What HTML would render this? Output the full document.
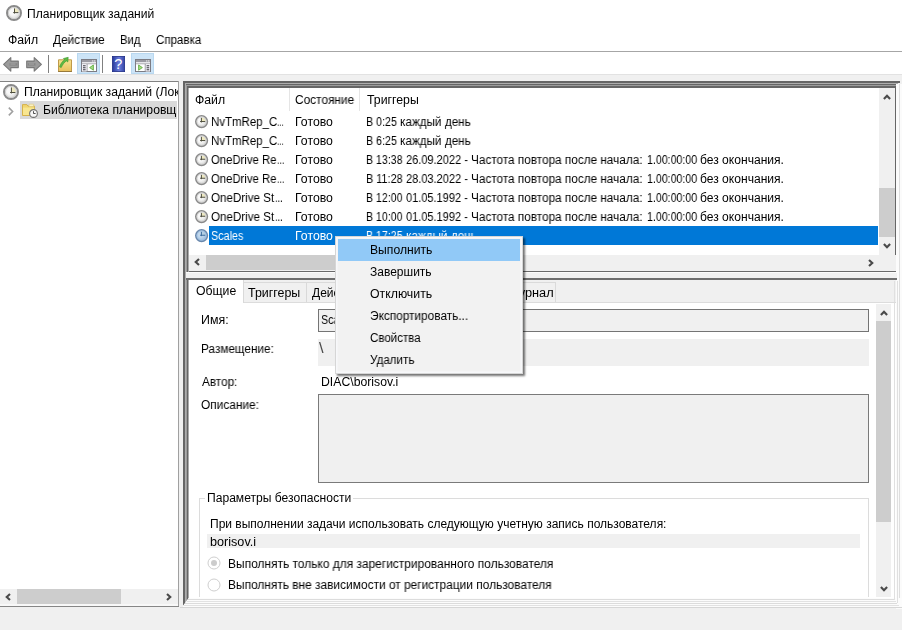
<!DOCTYPE html>
<html lang="ru"><head><meta charset="utf-8"><title>Планировщик заданий</title>
<style>
html,body{margin:0;padding:0;}
body{width:902px;height:630px;overflow:hidden;background:#f0f0f0;position:relative;font-family:"Liberation Sans",sans-serif;}
.t{position:absolute;white-space:nowrap;line-height:normal;display:block;will-change:transform;transform-origin:0 0;}
.r{position:absolute;display:block;}
svg{position:absolute;overflow:visible;}

</style></head>
<body>
<!-- title + menu -->
<div class="r" style="left:0;top:0;width:902px;height:51px;background:#fff"></div>
<div class="r" style="left:0;top:51px;width:902px;height:1px;background:#a6a6a6"></div>
<!-- toolbar -->
<div class="r" style="left:0;top:52px;width:902px;height:22px;background:#fff"></div>
<div class="r" style="left:0;top:74px;width:902px;height:0.9px;background:#e2e2e2"></div>
<!-- toolbar buttons -->
<div class="r" style="left:77.3px;top:52.6px;width:22.4px;height:21.5px;background:#cce4f7;border:1px solid #b9d8f0;box-sizing:border-box"></div>
<div class="r" style="left:131.3px;top:52.6px;width:22.4px;height:21.5px;background:#cce4f7;border:1px solid #b9d8f0;box-sizing:border-box"></div>
<div class="r" style="left:48px;top:55px;width:1px;height:17.7px;background:#808080"></div>
<div class="r" style="left:102.2px;top:55px;width:1px;height:17.7px;background:#808080"></div>
<!-- back / forward arrows -->
<svg style="left:3px;top:57px" width="16" height="15" viewBox="0 0 16 15"><path d="M7.8 0.6 L0.6 7.3 L7.8 14.2 L7.8 10.6 L15.3 10.6 L15.3 4.1 L7.8 4.1 Z" fill="#9b9b9b" stroke="#787878" stroke-width="1.1" stroke-linejoin="round"/><path d="M6.5 6.2h7.6v2.4H6.5z" fill="#868686"/><path d="M7.5 6.6h5v0.9h-5z" fill="#a8a8a8"/></svg>
<svg style="left:26px;top:57px" width="16" height="15" viewBox="0 0 16 15"><path d="M8.2 0.6 L15.4 7.3 L8.2 14.2 L8.2 10.6 L0.7 10.6 L0.7 4.1 L8.2 4.1 Z" fill="#9b9b9b" stroke="#787878" stroke-width="1.1" stroke-linejoin="round"/><path d="M1.9 6.2h7.6v2.4H1.9z" fill="#868686"/><path d="M3 6.6h5v0.9H3z" fill="#a8a8a8"/></svg>
<!-- folder up -->
<svg style="left:58px;top:57px" width="14" height="15" viewBox="0 0 14 15"><defs><linearGradient id="fg" x1="0" y1="0" x2="0" y2="1"><stop offset="0" stop-color="#f6e391"/><stop offset="1" stop-color="#e9c05c"/></linearGradient></defs><path d="M0.5 2.8h13v11.7H0.5z" fill="url(#fg)" stroke="#bf9a4a" stroke-width="1"/><path d="M0 14.2h14v0.8H0z" fill="#8f7136"/><path d="M1.6 9.8 C2.6 6.6 4.6 4 6.6 2.8 L5.4 1.5 L10.2 0.3 L9.8 5 L8.4 3.9 C6.6 5 4.6 7.4 3.2 10.6 Z" fill="#5dbb45" stroke="#3a962c" stroke-width="0.6"/></svg>
<!-- show/hide tree icon -->
<svg style="left:81px;top:59px" width="16" height="13" viewBox="0 0 16 13"><rect x="0.5" y="0.5" width="15" height="12" fill="#fff" stroke="#7c7c84"/><rect x="1" y="1" width="14" height="2" fill="#9a9aa2"/><rect x="11.2" y="1.4" width="1.1" height="1.1" fill="#fff"/><rect x="13.2" y="1.4" width="1.1" height="1.1" fill="#fff"/><rect x="1" y="3" width="14" height="1.5" fill="#e6e6ea"/><rect x="1" y="4.5" width="14" height="0.7" fill="#8c8c94"/><rect x="5.5" y="5" width="0.9" height="7.5" fill="#7c7c84"/><rect x="1" y="5.2" width="4.5" height="7.3" fill="#efeff6"/><rect x="2" y="6.2" width="2.6" height="1.1" fill="#4a4a52"/><rect x="2" y="8.2" width="2.6" height="1.1" fill="#4a4a52"/><rect x="2" y="10.2" width="2.6" height="1.1" fill="#4a4a52"/><path d="M12.4 6v5.2L8.6 8.6z" fill="#a6dc86" stroke="#58a835" stroke-width="0.8"/></svg>
<svg style="left:135px;top:59.2px" width="16" height="13" viewBox="0 0 16 13"><rect x="0.5" y="0.5" width="15" height="12" fill="#fff" stroke="#7c7c84"/><rect x="1" y="1" width="14" height="2" fill="#9a9aa2"/><rect x="11.2" y="1.4" width="1.1" height="1.1" fill="#fff"/><rect x="13.2" y="1.4" width="1.1" height="1.1" fill="#fff"/><rect x="1" y="3" width="14" height="1.5" fill="#e6e6ea"/><rect x="1" y="4.5" width="14" height="0.7" fill="#8c8c94"/><rect x="9.8" y="5" width="0.9" height="7.5" fill="#7c7c84"/><rect x="10.7" y="5.2" width="4.3" height="7.3" fill="#efeff6"/><rect x="11.6" y="6.2" width="2.6" height="1.1" fill="#4a4a52"/><rect x="11.6" y="8.2" width="2.6" height="1.1" fill="#4a4a52"/><rect x="11.6" y="10.2" width="2.6" height="1.1" fill="#4a4a52"/><path d="M3.6 6v5.2L7.4 8.6z" fill="#a6dc86" stroke="#58a835" stroke-width="0.8"/></svg>
<!-- help icon -->
<svg style="left:112px;top:56px" width="13" height="16" viewBox="0 0 13 16"><defs><linearGradient id="hg" x1="0" y1="0" x2="1" y2="0"><stop offset="0" stop-color="#27389a"/><stop offset="0.55" stop-color="#6b7ddb"/><stop offset="1" stop-color="#3344a6"/></linearGradient></defs><rect x="0.4" y="0.4" width="12.2" height="15.2" fill="url(#hg)" stroke="#1f2d86" stroke-width="0.8"/><text x="6.3" y="13" text-anchor="middle" font-family="Liberation Sans, sans-serif" font-size="14.5" fill="#fff">?</text></svg>

<!-- left panel -->
<div class="r" style="left:0;top:81.3px;width:179px;height:1px;background:#828282"></div>
<div class="r" style="left:0;top:82px;width:178px;height:524px;background:#fff"></div>
<div class="r" style="left:178px;top:81px;width:1px;height:526px;background:#a0a0a0"></div>
<div class="r" style="left:0;top:606px;width:179px;height:1px;background:#868686"></div>
<div class="r" style="left:20.2px;top:101.3px;width:156.8px;height:17.5px;background:#d9d9d9"></div>
<!-- tree chevron -->
<svg style="left:8px;top:107px" width="6" height="9" viewBox="0 0 6 9"><path d="M0.8 0.6 L4.6 4.5 L0.8 8.4" fill="none" stroke="#a0a0a0" stroke-width="1.6"/></svg>
<!-- left hscroll -->
<div class="r" style="left:0;top:588.8px;width:178px;height:16.4px;background:#f0f0f0"></div><div class="r" style="left:0;top:604.2px;width:178px;height:1.8px;background:#f8f8f8"></div>
<div class="r" style="left:17px;top:588.8px;width:103.5px;height:15.4px;background:#cdcdcd"></div>
<svg style="left:4.6px;top:592.6px" width="6" height="8" viewBox="0 0 6 8"><path d="M5 0.9 L1.7 4 L5 7.1" fill="none" stroke="#4a4a4a" stroke-width="2.1"/></svg>
<svg style="left:166.4px;top:592.7px" width="6" height="8" viewBox="0 0 6 8"><path d="M1 0.9 L4.3 4 L1 7.1" fill="none" stroke="#4a4a4a" stroke-width="2.1"/></svg>

<!-- right frame: thick top/left border -->
<div class="r" style="left:182.5px;top:81.2px;width:717.5px;height:2.3px;background:#666666"></div>
<div class="r" style="left:182.5px;top:83px;width:714.5px;height:4.9px;background:#666666"></div>
<div class="r" style="left:182.5px;top:81.2px;width:6px;height:525.6px;background:#666666;clip-path:polygon(0 0,100% 0,100% 518.3px,0 525.6px)"></div>
<div class="r" style="left:184.6px;top:83.2px;width:713px;height:0.8px;background:#adadad"></div>
<div class="r" style="left:186.3px;top:85px;width:710px;height:0.7px;background:#9c9c9c"></div>
<div class="r" style="left:184.6px;top:83.2px;width:0.8px;height:521px;background:#adadad"></div>
<div class="r" style="left:186.3px;top:85px;width:0.7px;height:517px;background:#9c9c9c"></div>
<!-- top pane -->
<div class="r" style="left:188.5px;top:87.9px;width:707.5px;height:183.1px;background:#fff"></div>
<div class="r" style="left:895.1px;top:86px;width:1.2px;height:186.2px;background:#666"></div>
<div class="r" style="left:188.5px;top:270.9px;width:707.8px;height:1.3px;background:#6a6a6a"></div>
<div class="r" style="left:896.3px;top:83.5px;width:5.7px;height:525px;background:#fbfbfb"></div>
<div class="r" style="left:899.3px;top:84px;width:1px;height:521px;background:#dedede"></div>
<!-- header separators -->
<div class="r" style="left:289px;top:88px;width:1px;height:23px;background:#e5e5e5"></div>
<div class="r" style="left:359px;top:88px;width:1px;height:23px;background:#e5e5e5"></div>
<!-- selected row -->
<div class="r" style="left:209px;top:226px;width:669px;height:18.7px;background:#0078d7"></div>
<!-- vscroll top pane -->
<div class="r" style="left:879.2px;top:87.9px;width:16px;height:167.1px;background:#f0f0f0"></div>
<div class="r" style="left:879.2px;top:188px;width:16px;height:48.6px;background:#cdcdcd"></div>
<svg style="left:883.2px;top:93.9px" width="8" height="6" viewBox="0 0 8 6"><path d="M0.9 5 L4 1.7 L7.1 5" fill="none" stroke="#4a4a4a" stroke-width="2.1"/></svg>
<svg style="left:883px;top:242.9px" width="8" height="6" viewBox="0 0 8 6"><path d="M0.9 1 L4 4.3 L7.1 1" fill="none" stroke="#4a4a4a" stroke-width="2.1"/></svg>
<!-- hscroll top pane -->
<div class="r" style="left:188.5px;top:255px;width:707.1px;height:15.9px;background:#f0f0f0"></div>
<div class="r" style="left:206.1px;top:255px;width:230px;height:15px;background:#cdcdcd"></div>
<svg style="left:193.7px;top:258.4px" width="6" height="8" viewBox="0 0 6 8"><path d="M5 0.9 L1.7 4 L5 7.1" fill="none" stroke="#4a4a4a" stroke-width="2.1"/></svg>
<svg style="left:868px;top:258.7px" width="6" height="8" viewBox="0 0 6 8"><path d="M1 0.9 L4.3 4 L1 7.1" fill="none" stroke="#4a4a4a" stroke-width="2.1"/></svg>
<!-- splitter gap -->
<div class="r" style="left:185.8px;top:272.2px;width:711.2px;height:6.2px;background:#f1f1f1"></div>
<div class="r" style="left:185.8px;top:272.2px;width:711.2px;height:1.3px;background:#fcfcfc"></div>
<!-- bottom pane -->
<div class="r" style="left:185.8px;top:278.3px;width:711.2px;height:1.9px;background:#6e6e6e"></div>
<div class="r" style="left:188.5px;top:280.2px;width:707.5px;height:317.8px;background:#fff"></div>
<div class="r" style="left:188.5px;top:280.2px;width:707.5px;height:22px;background:#f0f0f0"></div>
<!-- bottom/right light bevel -->
<div class="r" style="left:182.5px;top:598px;width:719.5px;height:10px;background:#fcfcfc;clip-path:polygon(6px 0,100% 0,100% 100%,0 100%,0 8.6px)"></div>
<div class="r" style="left:188.3px;top:599.3px;width:706px;height:0.8px;background:#dcdcdc"></div>
<div class="r" style="left:186.8px;top:601.1px;width:709px;height:0.8px;background:#e2e2e2"></div>
<div class="r" style="left:185.2px;top:602.9px;width:712px;height:0.8px;background:#dcdcdc"></div>
<div class="r" style="left:183.6px;top:604.8px;width:715px;height:0.8px;background:#e2e2e2"></div>
<div class="r" style="left:180px;top:607px;width:722px;height:0.9px;background:#d6d6d6"></div>
<div class="r" style="left:893.7px;top:281px;width:0.9px;height:319px;background:#e0e0e0"></div>
<div class="r" style="left:896.9px;top:281px;width:0.9px;height:322px;background:#e0e0e0"></div>
<!-- tabs -->
<div class="r" style="left:243.3px;top:282px;width:312.7px;height:21px;background:#f0f0f0;border:1px solid #dadada;box-sizing:border-box"></div>
<div class="r" style="left:305.5px;top:283px;width:1px;height:19px;background:#d9d9d9"></div>
<div class="r" style="left:368px;top:283px;width:1px;height:19px;background:#d9d9d9"></div>
<div class="r" style="left:425.5px;top:283px;width:1px;height:19px;background:#d9d9d9"></div>
<div class="r" style="left:497px;top:283px;width:1px;height:19px;background:#d9d9d9"></div>
<div class="r" style="left:243px;top:302px;width:653px;height:1px;background:#dcdcdc"></div>
<div class="r" style="left:188.5px;top:280.2px;width:54px;height:23px;background:#fff;border-right:1px solid #d9d9d9"></div>
<!-- form fields -->
<div class="r" style="left:318px;top:309px;width:551px;height:22.8px;background:#f0f0f0;border:1px solid #747474;box-sizing:border-box"></div>
<div class="r" style="left:318px;top:339.1px;width:551px;height:26.5px;background:#f0f0f0"></div>
<div class="r" style="left:318px;top:394.3px;width:551px;height:88.5px;background:#f0f0f0;border:1px solid #7a7a7a;box-sizing:border-box"></div>
<!-- group box -->
<div class="r" style="left:198.5px;top:497.7px;width:670.5px;height:99.8px;border:1px solid #dcdcdc;border-bottom:none;box-sizing:border-box"></div>
<div class="r" style="left:205px;top:492px;width:148px;height:12px;background:#fff"></div>
<div class="r" style="left:206.6px;top:534px;width:653.4px;height:14px;background:#f0f0f0"></div>
<!-- radios -->
<svg style="left:206.6px;top:556.1px" width="14" height="14" viewBox="0 0 14 14"><circle cx="7" cy="7" r="6" fill="#fff" stroke="#cfcfcf" stroke-width="1"/><circle cx="7" cy="7" r="3" fill="#cccccc"/></svg>
<svg style="left:206.6px;top:578.1px" width="14" height="14" viewBox="0 0 14 14"><circle cx="7" cy="7" r="6" fill="#fff" stroke="#cfcfcf" stroke-width="1"/></svg>
<!-- vscroll bottom pane -->
<div class="r" style="left:876.2px;top:303.8px;width:14.7px;height:293.7px;background:#f0f0f0"></div>
<div class="r" style="left:876.2px;top:320.9px;width:14.7px;height:201.1px;background:#cdcdcd"></div>
<svg style="left:879.6px;top:309.9px" width="8" height="6" viewBox="0 0 8 6"><path d="M0.9 5 L4 1.7 L7.1 5" fill="none" stroke="#4a4a4a" stroke-width="2.1"/></svg>
<svg style="left:879.5px;top:585.8px" width="8" height="6" viewBox="0 0 8 6"><path d="M0.9 1 L4 4.3 L7.1 1" fill="none" stroke="#4a4a4a" stroke-width="2.1"/></svg>

<svg style="left:6px;top:4.9px" width="16" height="16" viewBox="0 0 16 16"><defs><radialGradient id="cga" cx="0.42" cy="0.42" r="0.65"><stop offset="0.3" stop-color="#f8f8f8"/><stop offset="1" stop-color="#d2d2d0"/></radialGradient></defs><circle cx="8.0" cy="8.0" r="7.05" fill="url(#cga)" stroke="#8a8a8a" stroke-width="1.90"/><circle cx="8.0" cy="8.0" r="5.60" fill="none" stroke="#cfcfcf" stroke-width="1.00"/><path d="M9.00 7.10 V3.20 A4.80 4.80 0 0 1 12.80 7.10 Z" fill="#ebe4ae" opacity="0.75"/><path d="M8.50 3.40 V8.50 M7.20 7.60 H12.40" fill="none" stroke="#4e4e3c" stroke-width="1"/></svg>
<svg style="left:3.1px;top:84px" width="16" height="16" viewBox="0 0 16 16"><defs><radialGradient id="cgb" cx="0.42" cy="0.42" r="0.65"><stop offset="0.3" stop-color="#f8f8f8"/><stop offset="1" stop-color="#d2d2d0"/></radialGradient></defs><circle cx="8.0" cy="8.0" r="7.05" fill="url(#cgb)" stroke="#8a8a8a" stroke-width="1.90"/><circle cx="8.0" cy="8.0" r="5.60" fill="none" stroke="#cfcfcf" stroke-width="1.00"/><path d="M8.90 8.00 V3.20 A4.80 4.80 0 0 1 12.80 8.00 Z" fill="#ebe4ae" opacity="0.75"/><path d="M8.40 3.40 V9.40 M7.10 8.50 H12.40" fill="none" stroke="#4e4e3c" stroke-width="1"/></svg>
<svg style="left:195.1px;top:114.95px" width="13.2" height="13.2" viewBox="0 0 13.2 13.2"><defs><radialGradient id="cgr0" cx="0.42" cy="0.42" r="0.65"><stop offset="0.3" stop-color="#f8f8f8"/><stop offset="1" stop-color="#d2d2d0"/></radialGradient></defs><circle cx="6.6" cy="6.6" r="5.82" fill="url(#cgr0)" stroke="#8a8a8a" stroke-width="1.57"/><circle cx="6.6" cy="6.6" r="4.62" fill="none" stroke="#cfcfcf" stroke-width="0.82"/><path d="M6.90 6.05 V2.64 A3.96 3.96 0 0 1 10.56 6.05 Z" fill="#ebe4ae" opacity="0.75"/><path d="M6.40 2.81 V7.45 M5.10 6.55 H10.23" fill="none" stroke="#4e4e3c" stroke-width="1"/></svg>
<svg style="left:195.1px;top:133.95px" width="13.2" height="13.2" viewBox="0 0 13.2 13.2"><defs><radialGradient id="cgr1" cx="0.42" cy="0.42" r="0.65"><stop offset="0.3" stop-color="#f8f8f8"/><stop offset="1" stop-color="#d2d2d0"/></radialGradient></defs><circle cx="6.6" cy="6.6" r="5.82" fill="url(#cgr1)" stroke="#8a8a8a" stroke-width="1.57"/><circle cx="6.6" cy="6.6" r="4.62" fill="none" stroke="#cfcfcf" stroke-width="0.82"/><path d="M6.90 6.05 V2.64 A3.96 3.96 0 0 1 10.56 6.05 Z" fill="#ebe4ae" opacity="0.75"/><path d="M6.40 2.81 V7.45 M5.10 6.55 H10.23" fill="none" stroke="#4e4e3c" stroke-width="1"/></svg>
<svg style="left:195.1px;top:153.25px" width="13.2" height="13.2" viewBox="0 0 13.2 13.2"><defs><radialGradient id="cgr2" cx="0.42" cy="0.42" r="0.65"><stop offset="0.3" stop-color="#f8f8f8"/><stop offset="1" stop-color="#d2d2d0"/></radialGradient></defs><circle cx="6.6" cy="6.6" r="5.82" fill="url(#cgr2)" stroke="#8a8a8a" stroke-width="1.57"/><circle cx="6.6" cy="6.6" r="4.62" fill="none" stroke="#cfcfcf" stroke-width="0.82"/><path d="M6.90 5.75 V2.64 A3.96 3.96 0 0 1 10.56 5.75 Z" fill="#ebe4ae" opacity="0.75"/><path d="M6.40 2.81 V7.15 M5.10 6.25 H10.23" fill="none" stroke="#4e4e3c" stroke-width="1"/></svg>
<svg style="left:195.1px;top:172.25px" width="13.2" height="13.2" viewBox="0 0 13.2 13.2"><defs><radialGradient id="cgr3" cx="0.42" cy="0.42" r="0.65"><stop offset="0.3" stop-color="#f8f8f8"/><stop offset="1" stop-color="#d2d2d0"/></radialGradient></defs><circle cx="6.6" cy="6.6" r="5.82" fill="url(#cgr3)" stroke="#8a8a8a" stroke-width="1.57"/><circle cx="6.6" cy="6.6" r="4.62" fill="none" stroke="#cfcfcf" stroke-width="0.82"/><path d="M6.90 5.75 V2.64 A3.96 3.96 0 0 1 10.56 5.75 Z" fill="#ebe4ae" opacity="0.75"/><path d="M6.40 2.81 V7.15 M5.10 6.25 H10.23" fill="none" stroke="#4e4e3c" stroke-width="1"/></svg>
<svg style="left:195.1px;top:191.25px" width="13.2" height="13.2" viewBox="0 0 13.2 13.2"><defs><radialGradient id="cgr4" cx="0.42" cy="0.42" r="0.65"><stop offset="0.3" stop-color="#f8f8f8"/><stop offset="1" stop-color="#d2d2d0"/></radialGradient></defs><circle cx="6.6" cy="6.6" r="5.82" fill="url(#cgr4)" stroke="#8a8a8a" stroke-width="1.57"/><circle cx="6.6" cy="6.6" r="4.62" fill="none" stroke="#cfcfcf" stroke-width="0.82"/><path d="M6.90 5.75 V2.64 A3.96 3.96 0 0 1 10.56 5.75 Z" fill="#ebe4ae" opacity="0.75"/><path d="M6.40 2.81 V7.15 M5.10 6.25 H10.23" fill="none" stroke="#4e4e3c" stroke-width="1"/></svg>
<svg style="left:195.1px;top:210.25px" width="13.2" height="13.2" viewBox="0 0 13.2 13.2"><defs><radialGradient id="cgr5" cx="0.42" cy="0.42" r="0.65"><stop offset="0.3" stop-color="#f8f8f8"/><stop offset="1" stop-color="#d2d2d0"/></radialGradient></defs><circle cx="6.6" cy="6.6" r="5.82" fill="url(#cgr5)" stroke="#8a8a8a" stroke-width="1.57"/><circle cx="6.6" cy="6.6" r="4.62" fill="none" stroke="#cfcfcf" stroke-width="0.82"/><path d="M6.90 5.75 V2.64 A3.96 3.96 0 0 1 10.56 5.75 Z" fill="#ebe4ae" opacity="0.75"/><path d="M6.40 2.81 V7.15 M5.10 6.25 H10.23" fill="none" stroke="#4e4e3c" stroke-width="1"/></svg>
<svg style="left:195.1px;top:229.25px" width="13.2" height="13.2" viewBox="0 0 13.2 13.2"><defs><radialGradient id="cgr6" cx="0.42" cy="0.42" r="0.65"><stop offset="0.3" stop-color="#c3d8ec"/><stop offset="1" stop-color="#8fb2d6"/></radialGradient></defs><circle cx="6.6" cy="6.6" r="5.82" fill="url(#cgr6)" stroke="#6a88ac" stroke-width="1.57"/><circle cx="6.6" cy="6.6" r="4.62" fill="none" stroke="#9ec0e4" stroke-width="0.82"/><path d="M6.90 5.75 V2.64 A3.96 3.96 0 0 1 10.56 5.75 Z" fill="#b4cfe0" opacity="0.75"/><path d="M6.40 2.81 V7.15 M5.10 6.25 H10.23" fill="none" stroke="#3a6a9e" stroke-width="1"/></svg>
<svg style="left:22px;top:103px" width="16" height="15" viewBox="0 0 16 15"><path d="M0.5 1.6h4.4l1.1 1.5h6.4v9.4H0.5z" fill="#f1d56e" stroke="#d6b24a" stroke-width="1"/><path d="M7 1.2h4.6v2.2H7z" fill="#fbf3c8" stroke="#e0c878" stroke-width="0.6"/><path d="M1 4.6h11v7.4H1z" fill="#f8e690"/><circle cx="11.5" cy="10.5" r="3.9" fill="#f7f7f7" stroke="#707070" stroke-width="1.1"/><path d="M11.5 8.2V10.5H13.6" fill="none" stroke="#3c3c3c" stroke-width="0.9"/></svg>

<span class="t" style="left:26.52px;top:7.14px;font-size:12px;color:#000;transform:scaleX(1.0069);">Планировщик заданий</span>
<span class="t" style="left:7.76px;top:33.14px;font-size:12px;color:#000;transform:scaleX(1.0204);">Файл</span>
<span class="t" style="left:52.89px;top:33.14px;font-size:12px;color:#000;transform:scaleX(0.9810);">Действие</span>
<span class="t" style="left:119.88px;top:33.14px;font-size:12px;color:#000;transform:scaleX(0.9342);">Вид</span>
<span class="t" style="left:156.18px;top:33.14px;font-size:12px;color:#000;transform:scaleX(0.9602);">Справка</span>
<div class="r" style="left:0;top:0;width:177.5px;height:630px;overflow:hidden"><span class="t" style="left:23.72px;top:85.14px;font-size:12px;color:#000;transform:scaleX(1.0133);">Планировщик заданий (Локальный)</span></div>
<div class="r" style="left:0;top:0;width:177px;height:630px;overflow:hidden"><span class="t" style="left:43.30px;top:103.14px;font-size:12px;color:#000;transform:scaleX(1.0126);">Библиотека планировщика заданий</span></div>
<span class="t" style="left:194.76px;top:93.44px;font-size:12px;color:#000;transform:scaleX(1.0204);">Файл</span>
<span class="t" style="left:295.36px;top:93.44px;font-size:12px;color:#000;transform:scaleX(0.9880);">Состояние</span>
<span class="t" style="left:366.71px;top:93.44px;font-size:12px;color:#000;transform:scaleX(1.0253);">Триггеры</span>
<span class="t" style="left:210.76px;top:115.14px;font-size:12px;color:#000;transform:scaleX(0.9543);">NvTmRep_C</span><span class="t" style="left:276.94px;top:115.14px;font-size:12px;color:#000;transform:scaleX(0.6868);">...</span>
<span class="t" style="left:294.99px;top:115.14px;font-size:12px;color:#000;transform:scaleX(1.0240);">Готово</span>
<span class="t" style="left:366.12px;top:115.14px;font-size:12px;color:#000;transform:scaleX(0.8910);">В 0:25 </span><span class="t" style="left:400.31px;top:115.14px;font-size:12px;color:#000;transform:scaleX(0.9760);">каждый день</span>
<span class="t" style="left:210.76px;top:134.14px;font-size:12px;color:#000;transform:scaleX(0.9543);">NvTmRep_C</span><span class="t" style="left:276.94px;top:134.14px;font-size:12px;color:#000;transform:scaleX(0.6868);">...</span>
<span class="t" style="left:294.99px;top:134.14px;font-size:12px;color:#000;transform:scaleX(1.0240);">Готово</span>
<span class="t" style="left:366.12px;top:134.14px;font-size:12px;color:#000;transform:scaleX(0.8910);">В 6:25 </span><span class="t" style="left:400.31px;top:134.14px;font-size:12px;color:#000;transform:scaleX(0.9760);">каждый день</span>
<span class="t" style="left:211.13px;top:153.34px;font-size:12px;color:#000;transform:scaleX(0.9439);">OneDrive Re</span><span class="t" style="left:277.39px;top:153.34px;font-size:12px;color:#000;transform:scaleX(0.7249);">...</span>
<span class="t" style="left:294.99px;top:153.34px;font-size:12px;color:#000;transform:scaleX(1.0240);">Готово</span>
<span class="t" style="left:366.13px;top:153.34px;font-size:12px;color:#000;transform:scaleX(0.8831);">В 13:38 </span><span class="t" style="left:406.02px;top:153.34px;font-size:12px;color:#000;transform:scaleX(0.9179);">26.09.2022 - </span><span class="t" style="left:471.48px;top:153.34px;font-size:12px;color:#000;transform:scaleX(0.9801);">Частота повтора после начала: </span><span class="t" style="left:646.58px;top:153.34px;font-size:12px;color:#000;transform:scaleX(0.8850);">1.00:00:00 </span><span class="t" style="left:700.27px;top:153.34px;font-size:12px;color:#000;transform:scaleX(1.0060);">без окончания.</span>
<span class="t" style="left:211.13px;top:172.34px;font-size:12px;color:#000;transform:scaleX(0.9439);">OneDrive Re</span><span class="t" style="left:277.39px;top:172.34px;font-size:12px;color:#000;transform:scaleX(0.7249);">...</span>
<span class="t" style="left:294.99px;top:172.34px;font-size:12px;color:#000;transform:scaleX(1.0240);">Готово</span>
<span class="t" style="left:366.11px;top:172.34px;font-size:12px;color:#000;transform:scaleX(0.9058);">В 11:28 </span><span class="t" style="left:406.02px;top:172.34px;font-size:12px;color:#000;transform:scaleX(0.9179);">28.03.2022 - </span><span class="t" style="left:471.48px;top:172.34px;font-size:12px;color:#000;transform:scaleX(0.9801);">Частота повтора после начала: </span><span class="t" style="left:646.58px;top:172.34px;font-size:12px;color:#000;transform:scaleX(0.8850);">1.00:00:00 </span><span class="t" style="left:700.27px;top:172.34px;font-size:12px;color:#000;transform:scaleX(1.0060);">без окончания.</span>
<span class="t" style="left:211.12px;top:191.34px;font-size:12px;color:#000;transform:scaleX(0.9661);">OneDrive St</span><span class="t" style="left:274.86px;top:191.34px;font-size:12px;color:#000;transform:scaleX(0.7504);">...</span>
<span class="t" style="left:294.99px;top:191.34px;font-size:12px;color:#000;transform:scaleX(1.0240);">Готово</span>
<span class="t" style="left:366.13px;top:191.34px;font-size:12px;color:#000;transform:scaleX(0.8816);">В 12:00 </span><span class="t" style="left:406.14px;top:191.34px;font-size:12px;color:#000;transform:scaleX(0.9162);">01.05.1992 - </span><span class="t" style="left:471.48px;top:191.34px;font-size:12px;color:#000;transform:scaleX(0.9801);">Частота повтора после начала: </span><span class="t" style="left:646.58px;top:191.34px;font-size:12px;color:#000;transform:scaleX(0.8850);">1.00:00:00 </span><span class="t" style="left:700.27px;top:191.34px;font-size:12px;color:#000;transform:scaleX(1.0060);">без окончания.</span>
<span class="t" style="left:211.12px;top:210.34px;font-size:12px;color:#000;transform:scaleX(0.9661);">OneDrive St</span><span class="t" style="left:274.86px;top:210.34px;font-size:12px;color:#000;transform:scaleX(0.7504);">...</span>
<span class="t" style="left:294.99px;top:210.34px;font-size:12px;color:#000;transform:scaleX(1.0240);">Готово</span>
<span class="t" style="left:366.13px;top:210.34px;font-size:12px;color:#000;transform:scaleX(0.8816);">В 10:00 </span><span class="t" style="left:406.14px;top:210.34px;font-size:12px;color:#000;transform:scaleX(0.9162);">01.05.1992 - </span><span class="t" style="left:471.48px;top:210.34px;font-size:12px;color:#000;transform:scaleX(0.9801);">Частота повтора после начала: </span><span class="t" style="left:646.58px;top:210.34px;font-size:12px;color:#000;transform:scaleX(0.8850);">1.00:00:00 </span><span class="t" style="left:700.27px;top:210.34px;font-size:12px;color:#000;transform:scaleX(1.0060);">без окончания.</span>
<span class="t" style="left:210.90px;top:229.34px;font-size:12px;color:#fff;transform:scaleX(0.8993);">Scales</span>
<span class="t" style="left:294.99px;top:229.34px;font-size:12px;color:#fff;transform:scaleX(1.0240);">Готово</span>
<span class="t" style="left:366.13px;top:229.34px;font-size:12px;color:#fff;transform:scaleX(0.8836);">В 17:25 </span><span class="t" style="left:406.21px;top:229.34px;font-size:12px;color:#fff;transform:scaleX(0.9760);">каждый день</span>
<span class="t" style="left:196.39px;top:284.14px;font-size:12px;color:#000;transform:scaleX(1.0202);">Общие</span>
<span class="t" style="left:248.31px;top:286.44px;font-size:12px;color:#000;transform:scaleX(1.0354);">Триггеры</span>
<span class="t" style="left:312.39px;top:286.44px;font-size:12px;color:#000;">Действия</span>
<span class="t" style="left:374.38px;top:286.44px;font-size:12px;color:#000;">Условия</span>
<span class="t" style="left:431.03px;top:286.44px;font-size:12px;color:#000;">Параметры</span>
<span class="t" style="left:506.83px;top:286.44px;font-size:12px;color:#000;transform:scaleX(1.0643);">Журнал</span>
<span class="t" style="left:200.98px;top:313.44px;font-size:12px;color:#000;transform:scaleX(1.0331);">Имя:</span>
<span class="t" style="left:321.20px;top:313.44px;font-size:12px;color:#000;transform:scaleX(0.8964);">Scales</span>
<span class="t" style="left:201.04px;top:341.84px;font-size:12px;color:#000;transform:scaleX(0.9799);">Размещение:</span>
<span class="t" style="left:318.54px;top:339.03px;font-size:15px;color:#4a4a4a;transform:scaleX(1.0976);">\</span>
<span class="t" style="left:201.77px;top:375.44px;font-size:12px;color:#000;transform:scaleX(0.9787);">Автор:</span>
<span class="t" style="left:321.00px;top:375.44px;font-size:12px;color:#000;transform:scaleX(1.0199);">DIAC\borisov.i</span>
<span class="t" style="left:201.41px;top:398.44px;font-size:12px;color:#000;transform:scaleX(0.9899);">Описание:</span>
<span class="t" style="left:206.52px;top:491.44px;font-size:12px;color:#000;transform:scaleX(1.0078);">Параметры безопасности</span>
<span class="t" style="left:209.53px;top:516.64px;font-size:12px;color:#000;">При выполнении задачи использовать следующую учетную запись пользователя:</span>
<span class="t" style="left:209.65px;top:535.44px;font-size:12px;color:#000;transform:scaleX(1.0519);">borisov.i</span>
<span class="t" style="left:227.52px;top:556.84px;font-size:12px;color:#000;transform:scaleX(0.9956);">Выполнять только для зарегистрированного пользователя</span>
<span class="t" style="left:227.52px;top:578.44px;font-size:12px;color:#000;transform:scaleX(0.9919);">Выполнять вне зависимости от регистрации пользователя</span>
<!-- context menu -->
<div class="r" style="left:335.3px;top:236.1px;width:187.9px;height:137.8px;background:#f2f2f2;border:1px solid #d6d6d6;box-sizing:border-box;box-shadow:inset 0 0 0 1.5px #f7f8fa, 2px 2px 2px rgba(0,0,0,0.55)"></div>
<div class="r" style="left:338.1px;top:239.4px;width:182.1px;height:21.5px;background:#91c9f7"></div>

<span class="t" style="left:370.30px;top:242.94px;font-size:12px;color:#000;transform:scaleX(1.0128);">Выполнить</span>
<span class="t" style="left:370.02px;top:264.94px;font-size:12px;color:#000;">Завершить</span>
<span class="t" style="left:370.08px;top:286.94px;font-size:12px;color:#000;transform:scaleX(1.0254);">Отключить</span>
<span class="t" style="left:369.82px;top:308.94px;font-size:12px;color:#000;transform:scaleX(0.9859);">Экспортировать...</span>
<span class="t" style="left:370.08px;top:330.94px;font-size:12px;color:#000;transform:scaleX(0.9613);">Свойства</span>
<span class="t" style="left:370.10px;top:352.94px;font-size:12px;color:#000;transform:scaleX(0.9715);">Удалить</span>
</body></html>
